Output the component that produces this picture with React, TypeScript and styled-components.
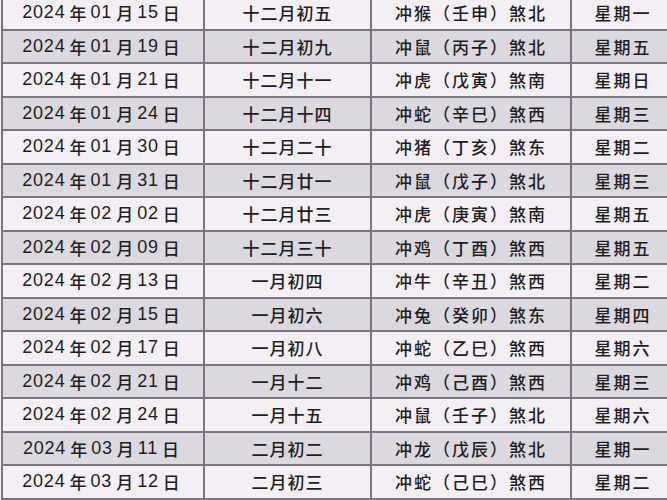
import styled, { createGlobalStyle } from 'styled-components';

const GlobalStyle = createGlobalStyle`
  html, body {
    margin: 0;
    padding: 0;
    background: #f3eef3;
    overflow: hidden;
  }
`;

const Sheet = styled.div`
  margin: -3px 0 0 1px;
  width: 675px;
  font-family: 'Noto Sans CJK SC', sans-serif;
  font-weight: 500;
  color: #1f1d21;
`;

interface RowProps {
  $shaded: boolean;
}

const Row = styled.div<RowProps>`
  display: grid;
  grid-template-columns: 202px 167px 200px 104px;
  height: 33.5px;
  box-sizing: border-box;
  border-bottom: 2px solid #7a7580;
  background: ${(p) => (p.$shaded ? '#dbd8df' : '#f4eff4')};
`;

interface CellProps {
  $spacing?: number;
}

const Cell = styled.div<CellProps>`
  display: flex;
  align-items: center;
  justify-content: center;
  border-left: 2px solid #7a7580;
  font-size: 17px;
  letter-spacing: ${(p) => p.$spacing ?? 0}px;
  white-space: nowrap;
  overflow: hidden;
`;

const Num = styled.span`
  font-family: 'Liberation Sans', sans-serif;
  font-weight: 400;
  font-size: 18px;
  letter-spacing: 0.8px;
`;

const Han = styled.span`
  font-size: 17px;
  margin: 0 4px;
`;

const rows: [string, string, string, string, string][] = [
  ['01', '15', '十二月初五', '冲猴（壬申）煞北', '星期一'],
  ['01', '19', '十二月初九', '冲鼠（丙子）煞北', '星期五'],
  ['01', '21', '十二月十一', '冲虎（戊寅）煞南', '星期日'],
  ['01', '24', '十二月十四', '冲蛇（辛巳）煞西', '星期三'],
  ['01', '30', '十二月二十', '冲猪（丁亥）煞东', '星期二'],
  ['01', '31', '十二月廿一', '冲鼠（戊子）煞北', '星期三'],
  ['02', '02', '十二月廿三', '冲虎（庚寅）煞南', '星期五'],
  ['02', '09', '十二月三十', '冲鸡（丁酉）煞西', '星期五'],
  ['02', '13', '一月初四', '冲牛（辛丑）煞西', '星期二'],
  ['02', '15', '一月初六', '冲兔（癸卯）煞东', '星期四'],
  ['02', '17', '一月初八', '冲蛇（乙巳）煞西', '星期六'],
  ['02', '21', '一月十二', '冲鸡（己酉）煞西', '星期三'],
  ['02', '24', '一月十五', '冲鼠（壬子）煞北', '星期六'],
  ['03', '11', '二月初二', '冲龙（戊辰）煞北', '星期一'],
  ['03', '12', '二月初三', '冲蛇（己巳）煞西', '星期二'],
];

export default function App() {
  return (
    <>
      <GlobalStyle />
      <Sheet>
        {rows.map(([m, d, lunar, clash, week], i) => (
          <Row key={m + d} $shaded={i % 2 === 1}>
            <Cell>
              <Num>2024</Num>
              <Han>年</Han>
              <Num>{m}</Num>
              <Han>月</Han>
              <Num>{d}</Num>
              <Han>日</Han>
            </Cell>
            <Cell $spacing={1}>{lunar}</Cell>
            <Cell $spacing={2}>{clash}</Cell>
            <Cell $spacing={2}>{week}</Cell>
          </Row>
        ))}
      </Sheet>
    </>
  );
}
